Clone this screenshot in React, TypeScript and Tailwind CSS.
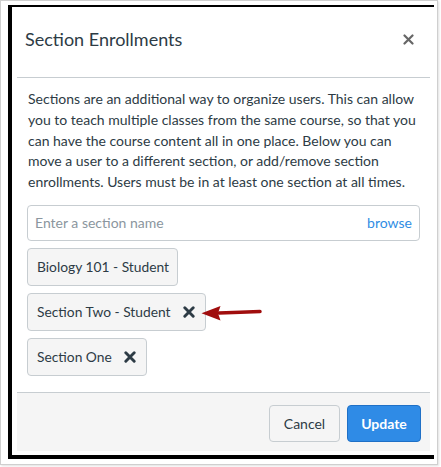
import React from 'react';

const TEXT = 'text-[#2d3b45]';

function RemoveIcon() {
  return (
    <svg width="12" height="12" viewBox="0 0 12 12" className="shrink-0">
      <path d="M1.8 1.8 L10.2 10.2 M10.2 1.8 L1.8 10.2" stroke="#2d3b45" strokeWidth="2.9" strokeLinecap="round" />
    </svg>
  );
}

function Pill({ label, removable }: { label: string; removable?: boolean }) {
  return (
    <div
      className={`inline-flex h-[38px] items-center gap-[12px] rounded-[4px] border border-[#c7cdd1] bg-[#f5f5f5] pl-[9px] ${
        removable ? 'pr-[10px]' : 'pr-[8px]'
      } text-[13.8px] ${TEXT}`}
    >
      <span>{label}</span>
      {removable && <RemoveIcon />}
    </div>
  );
}

export default function App() {
  return (
    <div className="h-[467px] w-[441px] bg-white" style={{ fontFamily: 'Lato, "Open Sans", sans-serif' }}>
      {/* screenshot frame */}
      <div className="h-[465px] w-[438px] border border-[#cfcfcf] bg-white shadow-[1px_1px_2px_rgba(0,0,0,0.12)]">
        <div className="ml-[7px] mt-[4px] h-[454px] w-[426px] border-b-4 border-l-4 border-t-2 border-black bg-white pb-[4px] pl-[5px]">
          {/* dialog */}
          <div className="flex h-[444px] w-[413px] flex-col">
            {/* header */}
            <div className="flex h-[71px] items-center justify-between border-b border-[#c7cdd1] pb-[6px] pl-[8px] pr-[16px]">
              <h2 className={`text-[18px] font-normal ${TEXT}`}>Section Enrollments</h2>
              <svg width="11" height="11" viewBox="0 0 11 11">
                <path d="M1.5 1.5 L9.5 9.5 M9.5 1.5 L1.5 9.5" stroke="#666" strokeWidth="2.2" strokeLinecap="round" />
              </svg>
            </div>

            {/* body */}
            <div className="flex flex-col px-[10px] pb-[14px] pt-[11px]">
              <p className={`pl-[1px] text-[14px] leading-[20.8px] ${TEXT}`}>
                Sections are an additional way to organize users. This can allow you to teach multiple classes from the
                same course, so that you can have the course content all in one place. Below you can move a user to a
                different section, or add/remove section enrollments. Users must be in at least one section at all
                times.
              </p>

              <div className="mt-[12px] flex h-[36px] items-center justify-between rounded-[4px] border border-[#c7cdd1] bg-white pl-[7px] pr-[7px]">
                <span className="text-[14px] text-[#8b969e]">Enter a section name</span>
                <span className="text-[14px] text-[#2f8de4]">browse</span>
              </div>

              <div className="mt-[7px] flex flex-col items-start gap-[7px]">
                <Pill label="Biology 101 - Student" />
                <div className="relative">
                  <Pill label="Section Two - Student" removable />
                  <svg
                    width="62"
                    height="20"
                    viewBox="0 0 62 20"
                    className="absolute left-[calc(100%-5px)] top-[10px]"
                  >
                    <path d="M18 10 Q40 9.4 59 8.6" stroke="#a00d0d" strokeWidth="3.5" strokeLinecap="round" fill="none" />
                    <path d="M0.5 10.2 L19.5 3 L17 10.2 L19.5 17.5 Z" fill="#a00d0d" />
                  </svg>
                </div>
                <Pill label="Section One" removable />
              </div>
            </div>

            {/* footer */}
            <div className="mt-auto flex h-[59px] items-center justify-end gap-[7px] border-t border-[#c7cdd1] bg-[#f5f5f5] pr-[9px] pt-[3px]">
              <button className={`h-[37px] w-[71px] rounded-[4px] border border-[#c7cdd1] bg-[#f5f5f5] text-[14px] ${TEXT}`}>
                Cancel
              </button>
              <button className="h-[37px] w-[74px] rounded-[4px] border border-[#1f70c6] bg-[#2f8be6] text-[14px] font-bold text-white">
                Update
              </button>
            </div>
          </div>
        </div>
      </div>
    </div>
  );
}
